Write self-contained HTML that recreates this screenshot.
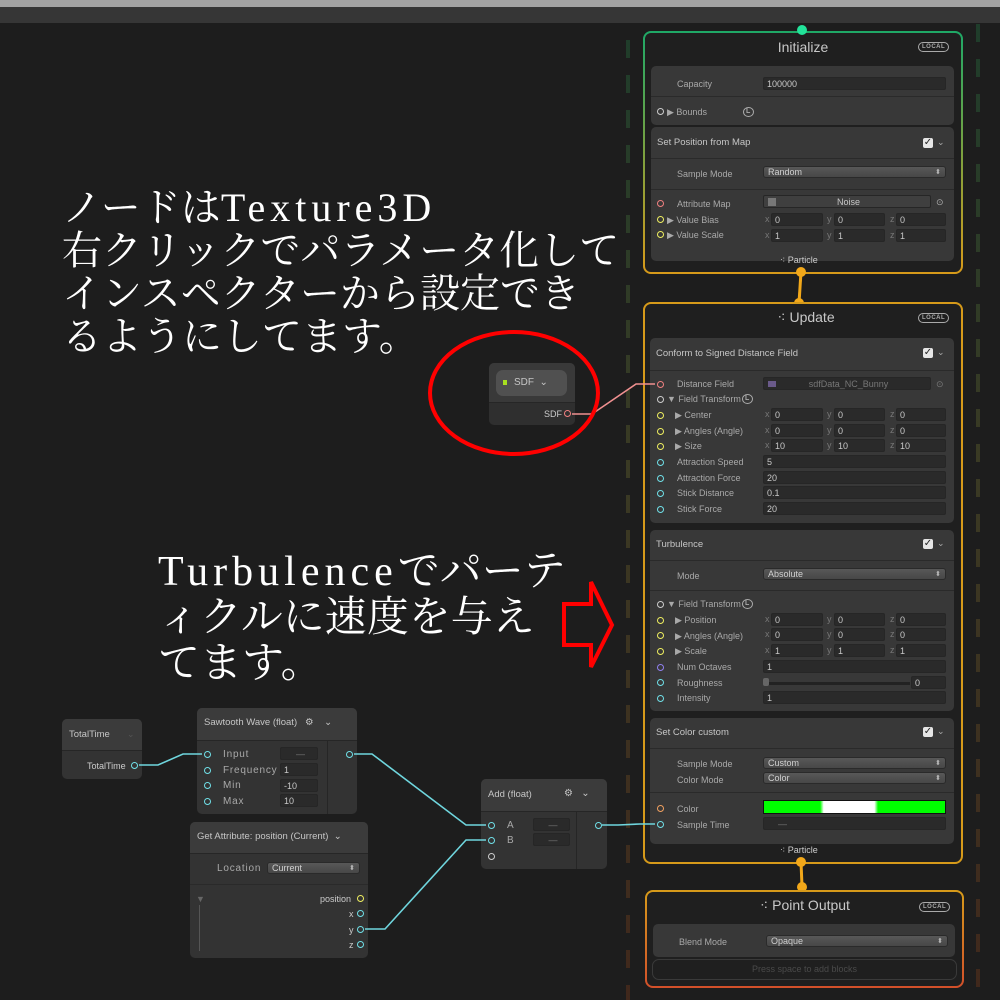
<!DOCTYPE html>
<html><head><meta charset="utf-8"><style>
*{margin:0;padding:0;box-sizing:border-box}
body{width:1000px;height:1000px;background:#1d1d1d;position:relative;overflow:hidden;font-family:"Liberation Sans","DejaVu Sans",sans-serif}
div{position:absolute}
.l{font-size:9px;color:#a9a9a9;line-height:12px;white-space:nowrap}
.h{font-size:10px;color:#c6c6c6;line-height:12px;white-space:nowrap}
.f{background:#2a2a2a;height:13px;border-radius:2px;font-size:9px;color:#c8c8c8;padding-left:3px;line-height:13px;border:1px solid #262626}
.dd{background:linear-gradient(#585858,#474747);height:12px;border-radius:3px;font-size:9px;color:#d0d0d0;padding-left:4px;line-height:11px;border:1px solid #2a2a2a}
.dd:after{content:"⬍";position:absolute;right:4px;top:0;font-size:7px;color:#bbb}
.p{width:7px;height:7px;border-radius:50%;border:1.5px solid #ccc}
.blk{background:#383838;border-radius:5px}
.sep{height:1px;background:#2a2a2a}
.ck{width:10px;height:10px;background:#e6e6e6;border-radius:2px;font-size:10px;line-height:10px;color:#222;text-align:center;font-weight:bold}
.chev{font-size:9px;color:#aaa}
.loc{border:1.3px solid #aaa;border-radius:6px;font-size:6px;font-weight:bold;color:#aaa;padding:0 3px;line-height:8px;letter-spacing:.5px}
.node{background:#353535;border-radius:5px}
.nh{background:#3b3b3b;border-radius:5px 5px 0 0;border-bottom:1px solid #262626}
.x{font-size:9px;color:#777;line-height:12px}
.jp{font-family:"Liberation Serif","Noto Serif CJK JP","Noto Serif CJK SC",serif;color:#fff;white-space:nowrap}
.lat{letter-spacing:5px}
</style></head><body>
<div style="left:0;top:0;width:1000px;height:7px;background:#a3a3a3"></div>
<div style="left:0;top:7px;width:1000px;height:16px;background:#363636"></div>

<svg style="position:absolute;left:0;top:0" width="1000" height="1000">
<defs><linearGradient id="dg" gradientUnits="userSpaceOnUse" x1="0" y1="24" x2="0" y2="1000"><stop offset="0" stop-color="#1f3d2b"/><stop offset=".45" stop-color="#3a3a24"/><stop offset="1" stop-color="#40281c"/></linearGradient>
<linearGradient id="cg1" x1="0" y1="0" x2="0" y2="1"><stop offset="0" stop-color="#1fa866"/><stop offset="1" stop-color="#d69a1a"/></linearGradient>
<linearGradient id="cg3" x1="0" y1="0" x2="0" y2="1"><stop offset="0" stop-color="#d69a1a"/><stop offset="1" stop-color="#d2502a"/></linearGradient></defs>
<rect x="626" y="24" width="4" height="976" fill="url(#dg)" style="display:none"/>
<line x1="628" y1="40" x2="628" y2="1000" stroke="url(#dg)" stroke-width="4" stroke-dasharray="18 17"/>
<line x1="978" y1="24" x2="978" y2="1000" stroke="url(#dg)" stroke-width="4" stroke-dasharray="18 17"/>
</svg>

<div class="jp" style="left:62px;top:186px;line-height:43px;font-size:40px">ノードは<span class="lat">Texture3D</span><br>右クリックでパラメータ化して<br>インスペクターから設定でき<br>るようにしてます。</div>
<div class="jp" style="left:158px;top:549px;line-height:46px;font-size:42px"><span class="lat">Turbulence</span>でパーテ<br>ィクルに速度を与え<br>てます。</div>

<svg style="position:absolute;left:643px;top:31px" width="320" height="243"><rect x="1" y="1" width="318" height="241" rx="7" fill="#1f1f1f" stroke="url(#cg1)" stroke-width="2"/></svg>
<div style="left:0;top:39px;width:1606px;text-align:center;font-size:14px;color:#c8c8c8">Initialize</div>
<div class="loc" style="left:918px;top:42px">LOCAL</div>
<div style="left:797px;top:25px;width:10px;height:10px;border-radius:50%;background:#22e39a"></div>
<div class="blk" style="left:651px;top:66px;width:303px;height:59px"></div>
<div class="l" style="left:677px;top:78px">Capacity</div>
<div class="f" style="left:763px;top:77px;width:183px">100000</div>
<div class="sep" style="left:651px;top:96px;width:303px"></div>
<div class="p" style="left:657px;top:108px"></div><div class="l" style="left:667px;top:106px">▶ Bounds</div>
<div class="loc" style="left:743px;top:107px;font-size:7px;border-radius:50%;padding:0 2px">L</div>
<div class="blk" style="left:651px;top:127px;width:303px;height:134px"></div>
<div class="h" style="left:657px;top:137px;font-size:9.5px">Set Position from Map</div>
<div class="ck" style="left:923px;top:138px">✓</div><div class="chev" style="left:937px;top:137px">⌄</div>
<div class="sep" style="left:651px;top:158px;width:303px"></div>
<div class="l" style="left:677px;top:168px">Sample Mode</div>
<div class="dd" style="left:763px;top:166px;width:183px">Random</div>
<div class="sep" style="left:651px;top:189px;width:303px"></div>
<div class="p" style="left:657px;top:200px;border-color:#f08080"></div><div class="l" style="left:677px;top:198px">Attribute Map</div>
<div class="f" style="left:763px;top:195px;width:168px;background:#3f3f3f;text-align:center">Noise<span style="position:absolute;left:4px;top:2px;width:8px;height:8px;background:#777"></span></div>
<div class="l" style="left:936px;top:196px;color:#aaa">⊙</div>
<div class="p" style="left:657px;top:216px;border-color:#eeee60"></div><div class="l" style="left:667px;top:214px">▶ Value Bias</div>
<div class="p" style="left:657px;top:231px;border-color:#eeee60"></div><div class="l" style="left:667px;top:229px">▶ Value Scale</div>
<div class="x" style="left:765px;top:213px">x</div><div class="f" style="left:771px;top:213px;width:52px">0</div>
<div class="x" style="left:827px;top:213px">y</div><div class="f" style="left:834px;top:213px;width:51px">0</div>
<div class="x" style="left:890px;top:213px">z</div><div class="f" style="left:896px;top:213px;width:50px">0</div>
<div class="x" style="left:765px;top:229px">x</div><div class="f" style="left:771px;top:229px;width:52px">1</div>
<div class="x" style="left:827px;top:229px">y</div><div class="f" style="left:834px;top:229px;width:51px">1</div>
<div class="x" style="left:890px;top:229px">z</div><div class="f" style="left:896px;top:229px;width:50px">1</div>
<div class="l" style="left:780px;top:254px;color:#ccc">⁖ Particle</div>

<svg style="position:absolute;left:790px;top:265px" width="20" height="45"><path d="M11 7 L9 38" stroke="#f2a81a" stroke-width="3"/><circle cx="11" cy="7" r="5" fill="#f2a81a"/><circle cx="9" cy="38" r="5" fill="#f2a81a"/></svg>

<svg style="position:absolute;left:643px;top:302px" width="320" height="562"><rect x="1" y="1" width="318" height="560" rx="7" fill="#1f1f1f" stroke="#d69a1a" stroke-width="2"/></svg>
<div style="left:0;top:309px;width:1612px;text-align:center;font-size:14px;color:#c8c8c8">⁖ Update</div>
<div class="loc" style="left:918px;top:313px">LOCAL</div>
<div class="blk" style="left:650px;top:338px;width:304px;height:185px"></div>
<div class="h" style="left:656px;top:348px;font-size:9.5px">Conform to Signed Distance Field</div>
<div class="ck" style="left:923px;top:348px">✓</div><div class="chev" style="left:937px;top:347px">⌄</div>
<div class="sep" style="left:650px;top:370px;width:304px"></div>
<div class="p" style="left:657px;top:381px;border-color:#f08080"></div><div class="l" style="left:677px;top:378px">Distance Field</div>
<div class="f" style="left:763px;top:377px;width:168px;text-align:center;color:#777">sdfData_NC_Bunny<span style="position:absolute;left:4px;top:3px;width:8px;height:6px;background:#6a5a8a"></span></div>
<div class="l" style="left:936px;top:378px;color:#777">⊙</div>
<div class="p" style="left:657px;top:396px"></div><div class="l" style="left:667px;top:393px">▼ Field Transform</div>
<div class="loc" style="left:742px;top:394px;font-size:7px;border-radius:50%;padding:0 2px">L</div>
<div class="p" style="left:657px;top:412px;border-color:#eeee60"></div><div class="l" style="left:675px;top:409px">▶ Center</div>
<div class="p" style="left:657px;top:428px;border-color:#eeee60"></div><div class="l" style="left:675px;top:425px">▶ Angles (Angle)</div>
<div class="p" style="left:657px;top:443px;border-color:#eeee60"></div><div class="l" style="left:675px;top:440px">▶ Size</div>
<div class="x" style="left:765px;top:408px">x</div><div class="f" style="left:771px;top:408px;width:52px">0</div>
<div class="x" style="left:827px;top:408px">y</div><div class="f" style="left:834px;top:408px;width:51px">0</div>
<div class="x" style="left:890px;top:408px">z</div><div class="f" style="left:896px;top:408px;width:50px">0</div>
<div class="x" style="left:765px;top:424px">x</div><div class="f" style="left:771px;top:424px;width:52px">0</div>
<div class="x" style="left:827px;top:424px">y</div><div class="f" style="left:834px;top:424px;width:51px">0</div>
<div class="x" style="left:890px;top:424px">z</div><div class="f" style="left:896px;top:424px;width:50px">0</div>
<div class="x" style="left:765px;top:439px">x</div><div class="f" style="left:771px;top:439px;width:52px">10</div>
<div class="x" style="left:827px;top:439px">y</div><div class="f" style="left:834px;top:439px;width:51px">10</div>
<div class="x" style="left:890px;top:439px">z</div><div class="f" style="left:896px;top:439px;width:50px">10</div>
<div class="p" style="left:657px;top:459px;border-color:#70e0e8"></div><div class="l" style="left:677px;top:456px">Attraction Speed</div><div class="f" style="left:763px;top:455px;width:183px">5</div>
<div class="p" style="left:657px;top:475px;border-color:#70e0e8"></div><div class="l" style="left:677px;top:472px">Attraction Force</div><div class="f" style="left:763px;top:471px;width:183px">20</div>
<div class="p" style="left:657px;top:490px;border-color:#70e0e8"></div><div class="l" style="left:677px;top:487px">Stick Distance</div><div class="f" style="left:763px;top:486px;width:183px">0.1</div>
<div class="p" style="left:657px;top:506px;border-color:#70e0e8"></div><div class="l" style="left:677px;top:503px">Stick Force</div><div class="f" style="left:763px;top:502px;width:183px">20</div>
<div class="blk" style="left:650px;top:530px;width:304px;height:181px"></div>
<div class="h" style="left:656px;top:539px;font-size:9.5px">Turbulence</div>
<div class="ck" style="left:923px;top:539px">✓</div><div class="chev" style="left:937px;top:538px">⌄</div>
<div class="sep" style="left:650px;top:560px;width:304px"></div>
<div class="l" style="left:677px;top:570px">Mode</div><div class="dd" style="left:763px;top:568px;width:183px">Absolute</div>
<div class="sep" style="left:650px;top:590px;width:304px"></div>
<div class="p" style="left:657px;top:601px"></div><div class="l" style="left:667px;top:598px">▼ Field Transform</div>
<div class="loc" style="left:742px;top:599px;font-size:7px;border-radius:50%;padding:0 2px">L</div>
<div class="p" style="left:657px;top:617px;border-color:#eeee60"></div><div class="l" style="left:675px;top:614px">▶ Position</div>
<div class="p" style="left:657px;top:632px;border-color:#eeee60"></div><div class="l" style="left:675px;top:630px">▶ Angles (Angle)</div>
<div class="p" style="left:657px;top:648px;border-color:#eeee60"></div><div class="l" style="left:675px;top:645px">▶ Scale</div>
<div class="x" style="left:765px;top:613px">x</div><div class="f" style="left:771px;top:613px;width:52px">0</div>
<div class="x" style="left:827px;top:613px">y</div><div class="f" style="left:834px;top:613px;width:51px">0</div>
<div class="x" style="left:890px;top:613px">z</div><div class="f" style="left:896px;top:613px;width:50px">0</div>
<div class="x" style="left:765px;top:628px">x</div><div class="f" style="left:771px;top:628px;width:52px">0</div>
<div class="x" style="left:827px;top:628px">y</div><div class="f" style="left:834px;top:628px;width:51px">0</div>
<div class="x" style="left:890px;top:628px">z</div><div class="f" style="left:896px;top:628px;width:50px">0</div>
<div class="x" style="left:765px;top:644px">x</div><div class="f" style="left:771px;top:644px;width:52px">1</div>
<div class="x" style="left:827px;top:644px">y</div><div class="f" style="left:834px;top:644px;width:51px">1</div>
<div class="x" style="left:890px;top:644px">z</div><div class="f" style="left:896px;top:644px;width:50px">1</div>
<div class="p" style="left:657px;top:664px;border-color:#9080f0"></div><div class="l" style="left:677px;top:661px">Num Octaves</div><div class="f" style="left:763px;top:660px;width:183px">1</div>
<div class="p" style="left:657px;top:679px;border-color:#70e0e8"></div><div class="l" style="left:677px;top:677px">Roughness</div>
<div style="left:766px;top:682px;width:144px;height:3px;background:#222"></div><div style="left:763px;top:678px;width:6px;height:8px;background:#666;border-radius:2px"></div>
<div class="f" style="left:911px;top:676px;width:35px">0</div>
<div class="p" style="left:657px;top:695px;border-color:#70e0e8"></div><div class="l" style="left:677px;top:692px">Intensity</div><div class="f" style="left:763px;top:691px;width:183px">1</div>
<div class="blk" style="left:650px;top:718px;width:304px;height:126px"></div>
<div class="h" style="left:656px;top:727px;font-size:9.5px">Set Color custom</div>
<div class="ck" style="left:923px;top:727px">✓</div><div class="chev" style="left:937px;top:726px">⌄</div>
<div class="sep" style="left:650px;top:748px;width:304px"></div>
<div class="l" style="left:677px;top:758px">Sample Mode</div><div class="dd" style="left:763px;top:757px;width:183px">Custom</div>
<div class="l" style="left:677px;top:774px">Color Mode</div><div class="dd" style="left:763px;top:772px;width:183px">Color</div>
<div class="sep" style="left:650px;top:792px;width:304px"></div>
<div class="p" style="left:657px;top:805px;border-color:#f0a060"></div><div class="l" style="left:677px;top:803px">Color</div>
<div style="left:763px;top:800px;width:183px;height:14px;border:1px solid #111;background:linear-gradient(90deg,#00ff00 0,#00ff00 31%,#fff 33%,#fff 61%,#00ff00 63%,#00ff00 100%)"></div>
<div class="p" style="left:657px;top:821px;border-color:#70e0e8"></div><div class="l" style="left:677px;top:819px">Sample Time</div>
<div class="f" style="left:763px;top:817px;width:183px;color:#777;padding-left:14px">—</div>
<div class="l" style="left:780px;top:844px;color:#ccc">⁖ Particle</div>

<svg style="position:absolute;left:790px;top:852px" width="20" height="45"><path d="M11 10 L12 34" stroke="#f2a81a" stroke-width="3"/><circle cx="11" cy="10" r="5" fill="#f2a81a"/><circle cx="12" cy="35" r="5" fill="#f2a81a"/></svg>

<svg style="position:absolute;left:645px;top:890px" width="320" height="98"><rect x="1" y="1" width="317" height="96" rx="7" fill="#1f1f1f" stroke="url(#cg3)" stroke-width="2"/></svg>
<div style="left:0;top:897px;width:1610px;text-align:center;font-size:14px;color:#c8c8c8">⁖ Point Output</div>
<div class="loc" style="left:919px;top:902px">LOCAL</div>
<div class="blk" style="left:653px;top:924px;width:302px;height:33px"></div>
<div class="l" style="left:679px;top:936px">Blend Mode</div><div class="dd" style="left:766px;top:935px;width:182px">Opaque</div>
<div style="left:652px;top:959px;width:305px;height:21px;border:1px solid #3a3a3a;border-radius:7px;text-align:center;font-size:9px;line-height:19px;color:#4a4a4a">Press space to add blocks</div>

<div class="node" style="left:489px;top:363px;width:86px;height:62px;background:#2f2f2f"></div>
<div style="left:489px;top:363px;width:86px;height:40px;background:#393939;border-radius:5px 5px 0 0;border-bottom:1px solid #262626"></div>
<div style="left:496px;top:370px;width:71px;height:26px;background:#505050;border-radius:7px"></div>
<div style="left:503px;top:380px;width:4px;height:5px;background:#a8e020"></div>
<div class="h" style="left:514px;top:377px;font-size:10px">SDF &nbsp;⌄</div>
<div class="l" style="left:544px;top:408px;color:#ccc">SDF</div>
<div class="p" style="left:564px;top:410px;border-color:#f08080"></div>

<div class="node" style="left:62px;top:719px;width:80px;height:60px;background:#333"></div>
<div class="nh" style="left:62px;top:719px;width:80px;height:32px"></div>
<div class="h" style="left:69px;top:729px;font-size:9.5px">TotalTime</div><div class="chev" style="left:127px;top:729px;color:#555">⌄</div>
<div class="l" style="left:87px;top:760px;color:#ccc">TotalTime</div>
<div class="p" style="left:131px;top:762px;border-color:#70e0e8"></div>

<div class="node" style="left:197px;top:708px;width:160px;height:106px;background:#333"></div>
<div class="nh" style="left:197px;top:708px;width:160px;height:33px"></div>
<div class="h" style="left:204px;top:717px;font-size:9.5px">Sawtooth Wave (float) &nbsp;&nbsp;⚙ &nbsp;&nbsp;&nbsp;⌄</div>
<div style="left:327px;top:741px;width:1px;height:73px;background:#262626"></div>
<div class="p" style="left:204px;top:751px;border-color:#70e0e8"></div><div class="l" style="left:223px;top:749px;letter-spacing:.8px;font-size:10px">Input</div><div class="f" style="left:280px;top:747px;width:38px;text-align:center;color:#777">—</div>
<div class="p" style="left:204px;top:767px;border-color:#70e0e8"></div><div class="l" style="left:223px;top:765px;letter-spacing:.8px;font-size:10px">Frequency</div><div class="f" style="left:280px;top:763px;width:38px">1</div>
<div class="p" style="left:204px;top:782px;border-color:#70e0e8"></div><div class="l" style="left:223px;top:780px;letter-spacing:.8px;font-size:10px">Min</div><div class="f" style="left:280px;top:779px;width:38px">-10</div>
<div class="p" style="left:204px;top:798px;border-color:#70e0e8"></div><div class="l" style="left:223px;top:796px;letter-spacing:.8px;font-size:10px">Max</div><div class="f" style="left:280px;top:794px;width:38px">10</div>
<div class="p" style="left:346px;top:751px;border-color:#70e0e8"></div>

<div class="node" style="left:190px;top:822px;width:178px;height:136px;background:#333"></div>
<div class="nh" style="left:190px;top:822px;width:178px;height:32px"></div>
<div class="h" style="left:197px;top:831px;font-size:9.5px">Get Attribute: position (Current) &nbsp;⌄</div>
<div class="l" style="left:217px;top:863px;letter-spacing:.8px;font-size:10px">Location</div><div class="dd" style="left:267px;top:862px;width:93px">Current</div>
<div class="sep" style="left:190px;top:884px;width:178px"></div>
<div class="l" style="left:196px;top:893px;color:#666">▼</div>
<div style="left:199px;top:905px;width:1px;height:46px;background:#555"></div>
<div class="l" style="left:320px;top:893px;color:#ccc">position</div><div class="p" style="left:357px;top:895px;border-color:#eeee60"></div>
<div class="l" style="left:349px;top:908px;color:#ccc">x</div><div class="p" style="left:357px;top:910px;border-color:#70e0e8"></div>
<div class="l" style="left:349px;top:924px;color:#ccc">y</div><div class="p" style="left:357px;top:926px;border-color:#70e0e8"></div>
<div class="l" style="left:349px;top:939px;color:#ccc">z</div><div class="p" style="left:357px;top:941px;border-color:#70e0e8"></div>

<div class="node" style="left:481px;top:779px;width:126px;height:90px;background:#333"></div>
<div class="nh" style="left:481px;top:779px;width:126px;height:33px"></div>
<div class="h" style="left:488px;top:789px;font-size:9.5px">Add (float)</div><div class="h" style="left:564px;top:788px">⚙ &nbsp;&nbsp;⌄</div>
<div style="left:576px;top:812px;width:1px;height:57px;background:#262626"></div>
<div class="p" style="left:488px;top:822px;border-color:#70e0e8"></div><div class="l" style="left:507px;top:820px;font-size:10px">A</div><div class="f" style="left:533px;top:818px;width:37px;text-align:center;color:#777">—</div>
<div class="p" style="left:488px;top:837px;border-color:#70e0e8"></div><div class="l" style="left:507px;top:835px;font-size:10px">B</div><div class="f" style="left:533px;top:833px;width:37px;text-align:center;color:#777">—</div>
<div class="p" style="left:488px;top:853px"></div>
<div class="p" style="left:595px;top:822px;border-color:#70e0e8"></div>

<svg style="position:absolute;left:0;top:0" width="1000" height="1000">
<g fill="none" stroke="#6fd6de" stroke-width="1.6">
<path d="M139 765 L158 765 L183 754 L202 754"/>
<path d="M354 754 L372 754 L466 825 L486 825"/>
<path d="M365 929 L385 929 L466 840 L486 840"/>
<path d="M602 825 L618 825 L640 824 L655 824"/>
</g>
<path d="M572 414 L592 414 L636 384 L655 384" fill="none" stroke="#f09090" stroke-width="1.6"/>
<ellipse cx="514" cy="393" rx="84" ry="61" fill="none" stroke="#ff0000" stroke-width="4"/>
<path d="M564 604 L591 604 L591 582 L612 625 L591 667 L591 645 L564 645 Z" fill="none" stroke="#ff0000" stroke-width="4"/>
</svg>
</body></html>
